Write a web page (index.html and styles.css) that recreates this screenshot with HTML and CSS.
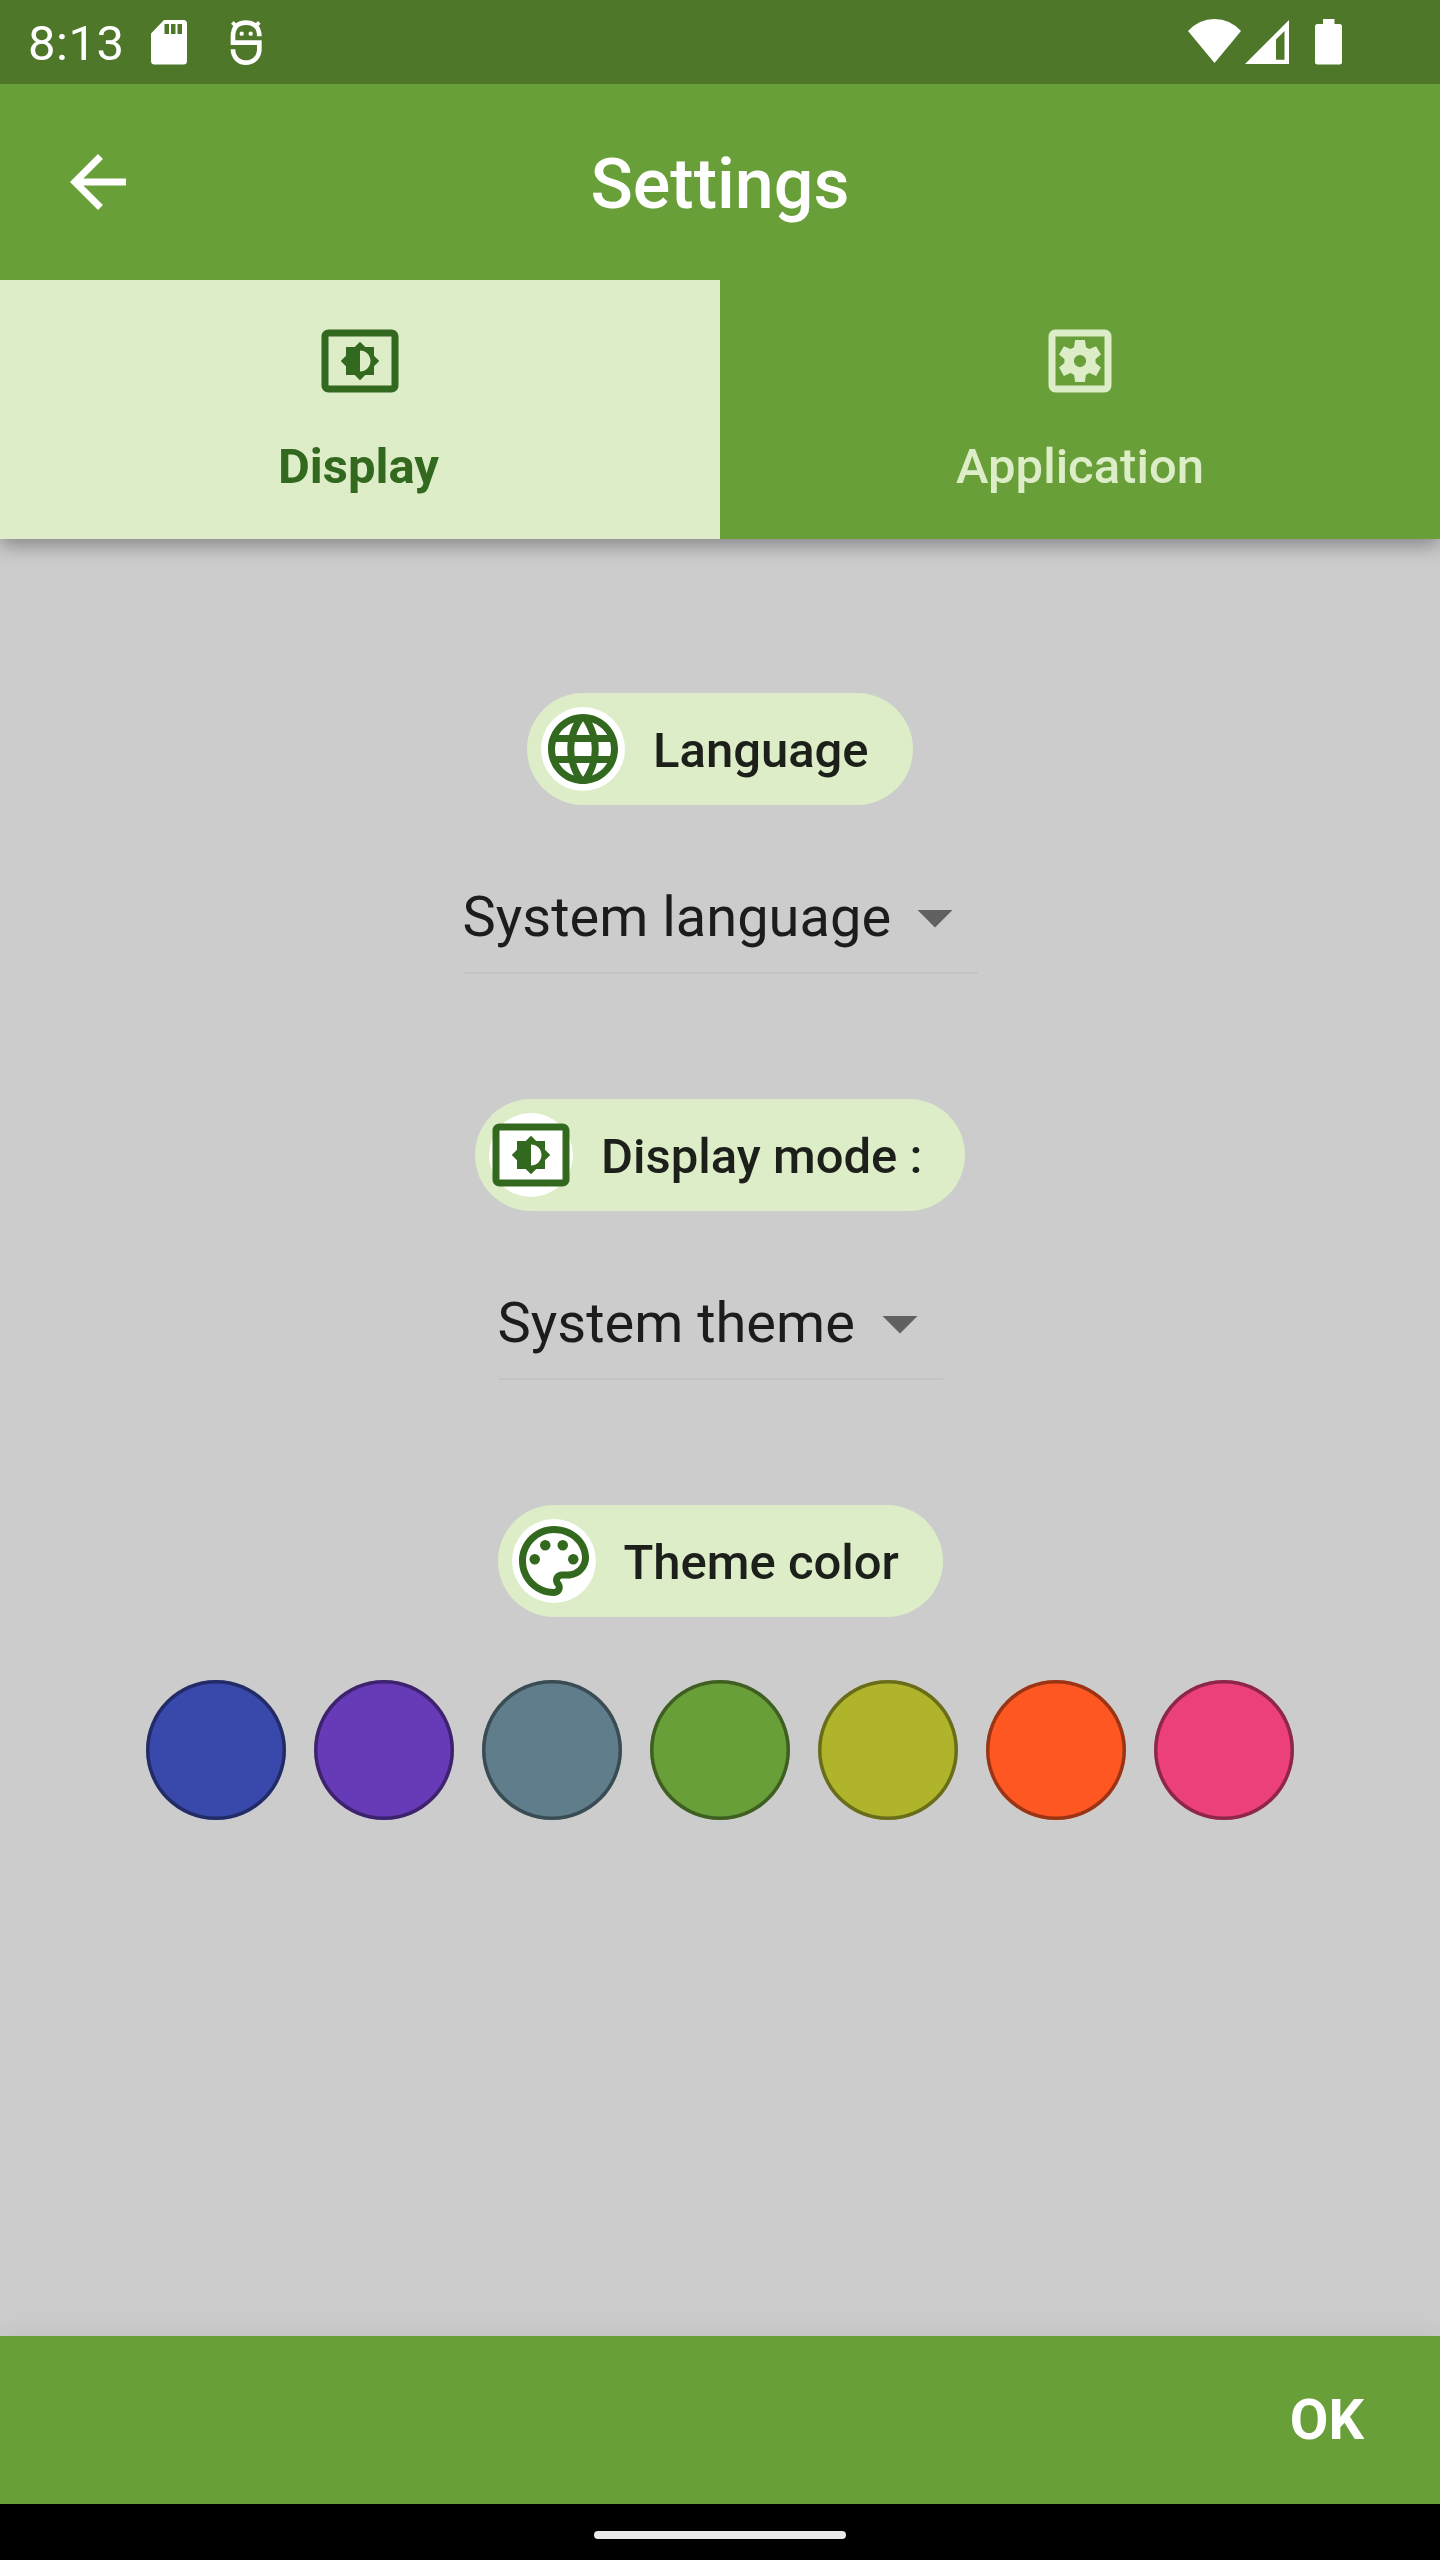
FILE: index.html
```html
<!DOCTYPE html>
<html lang="en">
<head>
<meta charset="utf-8">
<title>Settings</title>
<link rel="stylesheet" href="styles.css">
</head>
<body>
<svg class="defs" width="0" height="0" aria-hidden="true">
  <symbol id="brightness" viewBox="0 0 24 24"><path d="M21 3H3c-1.1 0-2 .9-2 2v14c0 1.1.9 2 2 2h18c1.1 0 2-.9 2-2V5c0-1.1-.9-2-2-2zm0 16.01H3V4.99h18v14.02zM8 16h2.5l1.5 1.5 1.5-1.5H16v-2.5l1.5-1.5-1.5-1.5V8h-2.5L12 6.5 10.5 8H8v2.5L6.5 12 8 13.5V16zm4-7c1.66 0 3 1.34 3 3s-1.34 3-3 3V9z"/></symbol>
  <symbol id="drop" viewBox="0 0 24 24"><path d="M7 10l5 5 5-5z"/></symbol>
</svg>
<div class="screen">
  <div class="status">
    <span class="clock">8:13</span>
    <svg class="sd" viewBox="0 0 36 45"><path fill-rule="evenodd" d="M13 0H32.500a3.500 3.500 0 0 1 3.500 3.500V41a3.500 3.500 0 0 1-3.500 3.500H3.500A3.500 3.500 0 0 1 0 41V13.500zM13.500 4v10H18V4zM20 4v10h4.500V4zM26.500 4v10h4.500V4z"/></svg>
    <svg class="droid" viewBox="0 0 96 135"><g fill="none" stroke="#fff"><path stroke-width="14" d="M88 49C88 21 71 8 48 8C25 8 9 21 9 49V68H88V88C88 111 71 128 48 128C25 128 9 111 9 88"/><path stroke-width="11" d="M7 7L22 22M88 7L73 22"/></g><circle cx="35" cy="41" r="6.500"/><circle cx="62" cy="41" r="6.500"/></svg>
    <span class="grow"></span>
    <svg class="wifi" viewBox="0 0 53 44"><path d="M0 12Q11 0 26.500 0T53 12L26.500 44z"/></svg>
    <svg class="signal" viewBox="0 0 44 44"><path fill-rule="evenodd" d="M0 44L44 0V44zM31 19.500V39.700H39.500V11z"/></svg>
    <svg class="battery" viewBox="0 0 27 46"><path d="M8 0H19.500V5H24.500a2.500 2.500 0 0 1 2.500 2.500V43a2.500 2.500 0 0 1-2.500 2.500H2.500A2.500 2.500 0 0 1 0 43V7.500A2.500 2.500 0 0 1 2.500 5H8z"/></svg>
  </div>
  <header class="appbar">
    <svg class="icon back" viewBox="0 0 24 24"><path d="M20 11H7.830l5.590-5.590L12 4l-8 8 8 8 1.410-1.410L7.830 13H20v-2z"/></svg>
    <h1>Settings</h1>
  </header>
  <nav class="tabs">
    <div class="tab active"><svg class="icon"><use href="#brightness"/></svg><span>Display</span></div>
    <div class="tab"><svg class="icon" viewBox="0 0 24 24"><path fill-rule="evenodd" d="M5 3H19a2 2 0 0 1 2 2V19a2 2 0 0 1-2 2H5a2 2 0 0 1-2-2V5a2 2 0 0 1 2-2zM5 5V19H19V5z"/><path fill-rule="evenodd" d="M10.600 6h2.800l.3 2.050l1 .5l1.900-.8l1.400 2.400l-1.550 1.250v1.200l1.550 1.250l-1.400 2.400l-1.900-.8l-1 .5l-.3 2.050h-2.800l-.3-2.050l-1-.5l-1.900.8l-1.400-2.400l1.550-1.250v-1.200l-1.550-1.250l1.400-2.400l1.900.8l1-.5zM12 10.250a1.750 1.750 0 1 0 0 3.500a1.750 1.750 0 1 0 0-3.500z"/></svg><span>Application</span></div>
  </nav>
  <main>
    <div class="chip language"><span class="avatar"><svg class="icon" viewBox="0 0 24 24"><path d="M11.990 2C6.470 2 2 6.480 2 12s4.470 10 9.990 10C17.520 22 22 17.520 22 12S17.520 2 11.990 2zm6.930 6h-2.950c-.32-1.250-.78-2.450-1.380-3.560 1.840.63 3.370 1.910 4.330 3.560zM12 4.040c.83 1.200 1.480 2.530 1.910 3.960h-3.820c.43-1.430 1.080-2.760 1.910-3.960zM4.260 14C4.100 13.360 4 12.690 4 12s.1-1.360.26-2h3.380c-.08.66-.14 1.320-.14 2s.06 1.340.14 2H4.260zm.82 2h2.950c.32 1.250.78 2.450 1.380 3.560-1.840-.63-3.370-1.900-4.330-3.560zm2.950-8H5.080c.96-1.660 2.490-2.930 4.330-3.560C8.810 5.550 8.350 6.750 8.030 8zM12 19.960c-.83-1.200-1.480-2.530-1.910-3.960h3.820c-.43 1.430-1.080 2.760-1.910 3.960zM14.340 14H9.660c-.09-.66-.16-1.320-.16-2s.07-1.350.16-2h4.680c.09.65.16 1.320.16 2s-.07 1.340-.16 2zm.25 5.560c.6-1.110 1.060-2.310 1.380-3.560h2.950c-.96 1.650-2.490 2.930-4.330 3.560zM16.360 14c.08-.66.14-1.320.14-2s-.06-1.340-.14-2h3.380c.16.640.26 1.310.26 2s-.1 1.360-.26 2h-3.380z"/></svg></span><span class="label">Language</span></div>
    <div class="select"><span>System language</span><svg class="icon"><use href="#drop"/></svg></div>
    <div class="chip mode"><span class="avatar"><svg class="icon"><use href="#brightness"/></svg></span><span class="label">Display mode :</span></div>
    <div class="select theme"><span>System theme</span><svg class="icon"><use href="#drop"/></svg></div>
    <div class="chip color"><span class="avatar"><svg class="icon" viewBox="0 0 24 24"><path d="M12 22C6.490 22 2 17.510 2 12S6.490 2 12 2s10 4.040 10 9c0 3.310-2.690 6-6 6h-1.770c-.28 0-.5.22-.5.5 0 .12.05.23.13.33.41.47.64 1.060.64 1.670 0 1.380-1.120 2.500-2.500 2.500zm0-18c-4.410 0-8 3.590-8 8s3.590 8 8 8c.28 0 .5-.22.5-.5 0-.16-.08-.28-.14-.35-.41-.46-.63-1.050-.63-1.650 0-1.380 1.120-2.500 2.500-2.500H16c2.210 0 4-1.790 4-4 0-3.860-3.590-7-8-7z"/><circle cx="6.500" cy="11.500" r="1.500"/><circle cx="9.500" cy="7.500" r="1.500"/><circle cx="14.500" cy="7.500" r="1.500"/><circle cx="17.500" cy="11.500" r="1.500"/></svg></span><span class="label">Theme color</span></div>
    <div class="swatches"><i class="indigo"></i><i class="purple"></i><i class="slate"></i><i class="green"></i><i class="lime"></i><i class="orange"></i><i class="pink"></i></div>
  </main>
  <footer><span>OK</span></footer>
  <div class="navbar"><i></i></div>
</div>
</body>
</html>
```
FILE: styles.css
```css
* { box-sizing: border-box; }
body { margin: 0; background: #ccc; font-family: Roboto, "Noto Sans", sans-serif; }
.defs { position: absolute; }
svg { display: block; flex: none; fill: currentColor; }
.icon { width: 84px; height: 84px; }
.screen { width: 1440px; height: 2560px; display: flex; flex-direction: column; overflow: hidden; background: #ccc; white-space: nowrap; }

.status { height: 84px; flex: none; display: flex; align-items: flex-start; padding: 0 98px 0 28px; background: #4e772a; color: #fff; }
.clock { width: 123px; font-size: 49px; line-height: 57px; padding-top: 15px; letter-spacing: .5px; }
.sd { width: 36px; height: 45px; margin-top: 20px; }
.droid { width: 32px; height: 45px; margin: 20px 0 0 43px; }
.grow { flex: 1; }
.wifi { width: 53px; height: 44px; margin-top: 19px; }
.signal { width: 44px; height: 44px; margin: 19.5px 0 0 4px; }
.battery { width: 27px; height: 46px; margin: 19px 0 0 26px; }

.appbar { position: relative; z-index: 1; height: 196px; flex: none; display: grid; grid-template-columns: 196px 1fr 196px; align-items: center; background: #689f38; color: #fff; }
.back { margin-left: 56px; }
h1 { margin: 0; text-align: center; font-size: 70px; line-height: 82px; font-weight: 500; padding-top: 4px; }

.tabs { height: 259px; flex: none; display: grid; grid-template-columns: 1fr 1fr; background: #689f38; color: #dcedc8; box-shadow: 0 5px 20px rgba(0,0,0,.38); }
.tab { display: flex; flex-direction: column; align-items: center; gap: 35px; padding-top: 39px; font-size: 49px; line-height: 57px; font-weight: 500; }
.tab.active { background: #dcedc8; color: #33691e; font-weight: 700; }
.tab.active span { padding-right: 3px; }

main { flex: 1; display: flex; flex-direction: column; align-items: center; padding-top: 154px; }
.chip { height: 112px; flex: none; display: flex; align-items: center; gap: 28px; padding-left: 14px; border-radius: 56px; background: #dcedc8; color: #1d1f1a; font-size: 49px; line-height: 57px; font-weight: 500; }
.label { padding-top: 2px; }
.language { width: 386px; }
.mode { width: 490px; }
.color { width: 445px; }
.avatar { width: 84px; height: 84px; flex: none; border-radius: 50%; background: #fff; color: #33691e; }
.select { width: 515px; height: 141px; margin: 28px 0 125px; flex: none; display: flex; justify-content: space-between; align-items: center; padding-top: 29px; border-bottom: 2px solid #c4c4c4; font-size: 56px; line-height: 66px; color: #1c1c1c; }
.theme { width: 445px; }
.select .icon { color: #616161; margin-right: 1px; }
.swatches { display: flex; gap: 28px; margin-top: 63px; }
.swatches i { width: 140px; height: 140px; border-radius: 50%; box-shadow: inset 0 0 0 3.5px rgba(0,0,0,.4); }
.indigo { background: #3949ab; }
.purple { background: #673ab7; }
.slate { background: #607d8b; }
.green { background: #689f38; }
.lime { background: #afb42b; }
.orange { background: #ff5722; }
.pink { background: #ec407a; }

footer { height: 168px; flex: none; display: flex; align-items: center; justify-content: flex-end; padding-right: 76px; background: #689f38; color: #fff; font-size: 56px; line-height: 66px; font-weight: 700; box-shadow: 0 0 28px rgba(0,0,0,.08); }
.navbar { position: relative; height: 56px; flex: none; display: flex; justify-content: center; padding-top: 27px; background: #000; }
.navbar i { width: 252px; height: 8px; border-radius: 4px; background: #ebebeb; }
```
